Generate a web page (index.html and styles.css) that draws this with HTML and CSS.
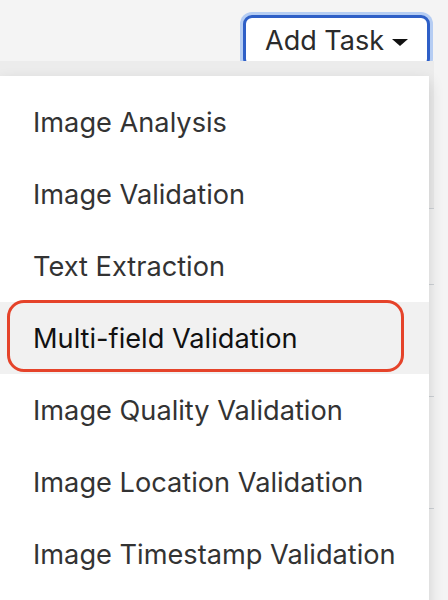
FILE: index.html
```html
<!DOCTYPE html>
<html>
<head>
<meta charset="utf-8">
<link rel="stylesheet" href="styles.css">
</head>
<body>
<div class="page">
  <div class="toolbar">
    <button class="add-btn">Add Task <span class="caret"></span></button>
  </div>
  <div class="content">
    <div class="table">
      <div class="thead"></div>
      <div class="row"></div>
      <div class="row"></div>
      <div class="row"></div>
      <div class="row"></div>
    </div>
    <ul class="menu">
      <li class="item">Image Analysis</li>
      <li class="item">Image Validation</li>
      <li class="item">Text Extraction</li>
      <li class="item active">Multi-field Validation<span class="highlight"></span></li>
      <li class="item">Image Quality Validation</li>
      <li class="item">Image Location Validation</li>
      <li class="item">Image Timestamp Validation</li>
      <li class="item empty"></li>
    </ul>
  </div>
</div>
</body>
</html>
```

FILE: styles.css
```css
html, body {
  margin: 0;
  padding: 0;
  background: #f4f4f4;
  font-family: Inter, "Liberation Sans", Arial, sans-serif;
  overflow: hidden;
  height: 600px;
}
.page {
  width: 448px;
  height: 600px;
}
.toolbar {
  display: flex;
  justify-content: flex-end;
  padding: 15px 18px 0 0;
  height: 61px;
  box-sizing: border-box;
}
.add-btn {
  height: 53px;
  width: 187px;
  box-sizing: border-box;
  background: #fff;
  border: 3.5px solid #2e5fc7;
  border-radius: 9px;
  box-shadow: 0 0 0 3px #b5cdf3;
  font-family: Inter, "Liberation Sans", Arial, sans-serif;
  font-size: 27px;
  color: #2b2b2b;
  display: flex;
  align-items: center;
  justify-content: center;
  gap: 8px;
  padding: 0 0 2px 0;
}
.caret {
  width: 0;
  height: 0;
  border-left: 8px solid transparent;
  border-right: 8px solid transparent;
  border-top: 7px solid #111;
  margin-top: 3px;
}
.content {
  position: relative;
}
.table {
  width: 434px;
}
.thead {
  height: 147px;
  background: #ececec;
}
.row {
  height: 111px;
  border-top: 1.5px solid #cfd3d7;
}
.table .thead + .row {
  height: 75px;
}
.menu {
  position: absolute;
  top: 15px;
  left: 0;
  width: 429px;
  margin: 0;
  padding: 10px 0;
  list-style: none;
  background: #fff;
  box-shadow: 0 6px 14px rgba(0, 0, 0, 0.16);
}
.item {
  position: relative;
  height: 72px;
  line-height: 74px;
  padding-left: 33px;
  font-size: 27.2px;
  color: #333;
  white-space: nowrap;
}
.item.active {
  background: #f1f1f1;
  color: #111;
}
.highlight {
  position: absolute;
  left: 7px;
  top: -2px;
  width: 397px;
  height: 72px;
  box-sizing: border-box;
  border: 3.5px solid #e5432a;
  border-radius: 17px;
}
```
